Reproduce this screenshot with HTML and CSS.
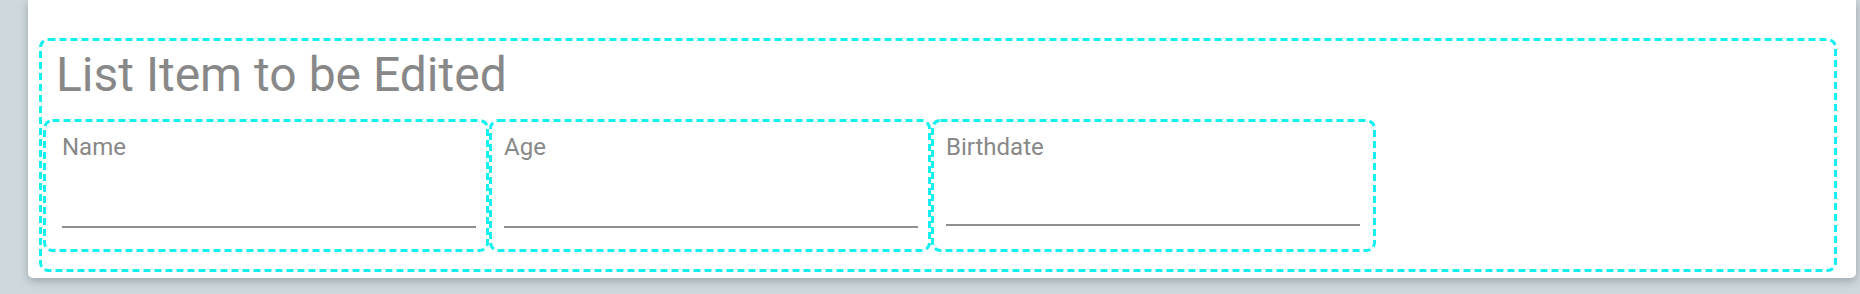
FILE: index.html
```html
<!DOCTYPE html>
<html>
<head>
<meta charset="utf-8">
<link rel="stylesheet" href="styles.css">
</head>
<body>
<div class="card">
  <div class="editor">
    <h1 class="title">List Item to be Edited</h1>
    <div class="fields">
      <div class="field field-name">
        <label class="label">Name</label>
        <div class="line"></div>
      </div>
      <div class="field field-age">
        <label class="label">Age</label>
        <div class="line"></div>
      </div>
      <div class="field field-date">
        <label class="label">Birthdate</label>
        <div class="line line-date"></div>
      </div>
    </div>
  </div>
</div>
</body>
</html>
```
FILE: styles.css
```css
html, body {
  margin: 0;
  padding: 0;
}
body {
  background: #cfd8dc;
  width: 1860px;
  height: 294px;
  overflow: hidden;
  font-family: Roboto, "Liberation Sans", sans-serif;
}
.card {
  box-sizing: border-box;
  margin-left: 28px;
  width: 1828px;
  height: 278px;
  background: #ffffff;
  border-radius: 0 0 5px 5px;
  box-shadow: 0 3px 8px rgba(60, 70, 80, 0.35);
  padding: 38px 19px 6px 11px;
}
.editor {
  box-sizing: border-box;
  width: 1798px;
  height: 234px;
  padding: 3px 3px 3px 4px;
  background-image: url("data:image/svg+xml,%3Csvg xmlns='http://www.w3.org/2000/svg' width='1798' height='234'%3E%3Crect x='1.5' y='1.5' width='1795' height='231' rx='8' ry='8' fill='none' stroke='%2314f0f0' stroke-width='3' stroke-dasharray='7 4'/%3E%3C/svg%3E");
  background-repeat: no-repeat;
}
.title {
  margin: 6px 0 0 13px;
  font-size: 48px;
  line-height: 56px;
  font-weight: 400;
  color: #888888;
}
.fields {
  display: flex;
  margin-top: 16px;
}
.field {
  box-sizing: border-box;
  height: 133px;
  display: flex;
  flex-direction: column;
  background-repeat: no-repeat;
}
.field-name {
  flex: 0 0 446px;
  padding: 14px 13px 0 19px;
  background-image: url("data:image/svg+xml,%3Csvg xmlns='http://www.w3.org/2000/svg' width='446' height='133'%3E%3Crect x='1.5' y='1.5' width='443' height='130' rx='8' ry='8' fill='none' stroke='%2314f0f0' stroke-width='3' stroke-dasharray='7 4'/%3E%3C/svg%3E");
}
.field-age {
  flex: 0 0 442px;
  padding: 14px 13px 0 15px;
  background-image: url("data:image/svg+xml,%3Csvg xmlns='http://www.w3.org/2000/svg' width='442' height='133'%3E%3Crect x='1.5' y='1.5' width='439' height='130' rx='8' ry='8' fill='none' stroke='%2314f0f0' stroke-width='3' stroke-dasharray='7 4'/%3E%3C/svg%3E");
}
.field-date {
  flex: 0 0 445px;
  padding: 14px 16px 0 15px;
  background-image: url("data:image/svg+xml,%3Csvg xmlns='http://www.w3.org/2000/svg' width='445' height='133'%3E%3Crect x='1.5' y='1.5' width='442' height='130' rx='8' ry='8' fill='none' stroke='%2314f0f0' stroke-width='3' stroke-dasharray='7 4'/%3E%3C/svg%3E");
}
.label {
  font-size: 24px;
  line-height: 28px;
  color: #888888;
}
.line {
  margin-top: 65px;
  height: 2px;
  background: #8e8e8e;
}
.line-date {
  margin-top: 63px;
}
```
